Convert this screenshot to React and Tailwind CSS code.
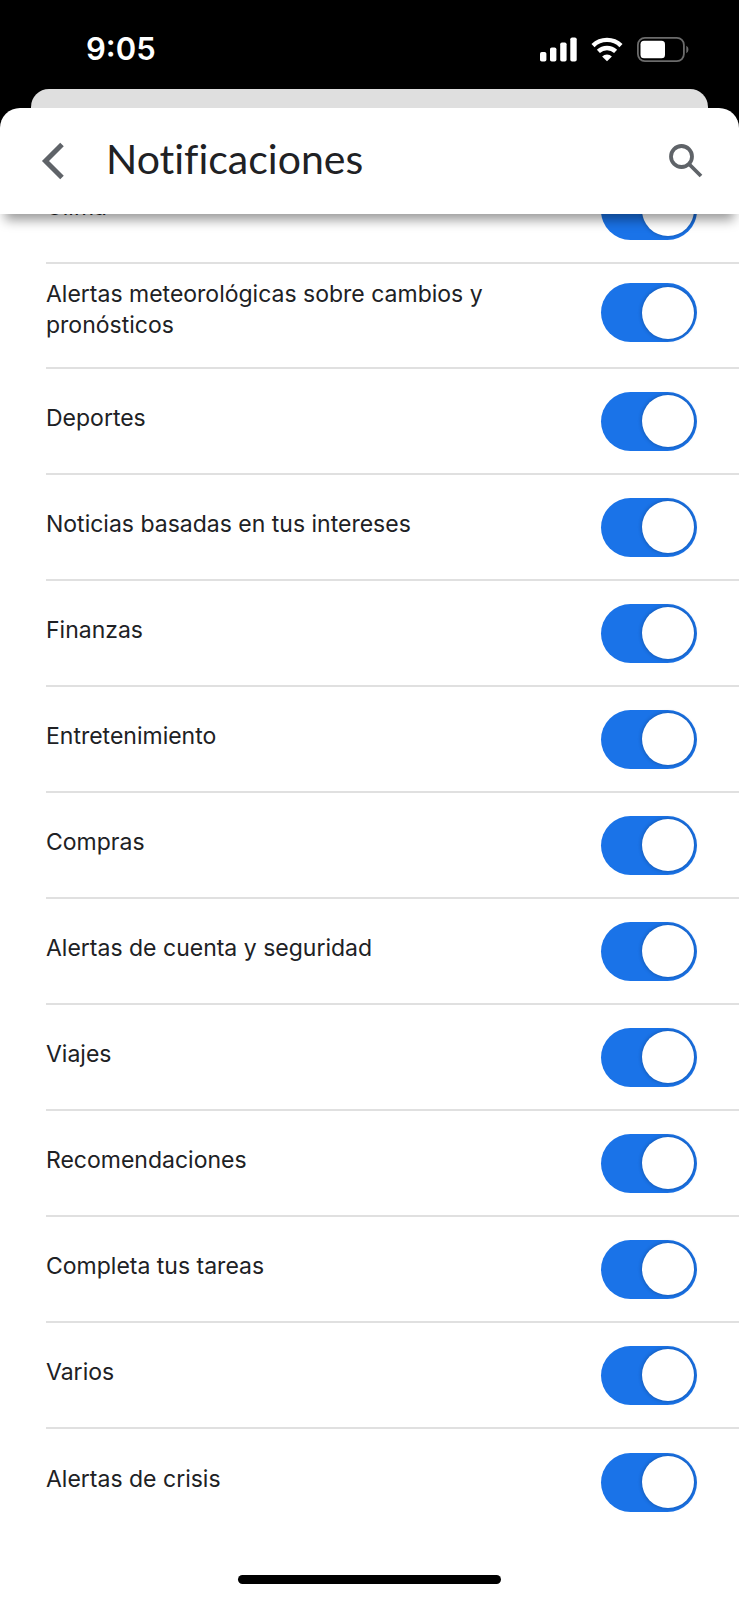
const categories = [
  'Clima',
  'Alertas meteorológicas sobre cambios y pronósticos',
  'Deportes',
  'Noticias basadas en tus intereses',
  'Finanzas',
  'Entretenimiento',
  'Compras',
  'Alertas de cuenta y seguridad',
  'Viajes',
  'Recomendaciones',
  'Completa tus tareas',
  'Varios',
  'Alertas de crisis',
];

function StatusBar() {
  return (
    <div className="flex h-[89px] items-center justify-between pt-[9px] pr-[50px] pl-[86px]">
      <span className="text-[31px] leading-10 font-semibold text-white">9:05</span>
      <div className="flex items-center gap-3.5">
        <svg width="37" height="25" viewBox="0 0 37 25" fill="#fff" aria-hidden="true">
          <rect x="0" y="15" width="6.4" height="9.5" rx="1.8" />
          <rect x="10" y="10.5" width="6.4" height="14" rx="1.8" />
          <rect x="20.200" y="5.500" width="6.400" height="19" rx="1.8" />
          <rect x="30.300" y="0.500" width="6.400" height="24" rx="1.8" />
        </svg>
        <svg width="32" height="25" viewBox="0 0 32 25" aria-hidden="true">
          <g fill="none" stroke="#fff" strokeWidth="4.400">
            <path d="M2 8.600a20 20 0 0 1 28 0" />
            <path d="M7.400 14.400a12.400 12.400 0 0 1 17.200 0" />
          </g>
          <path d="M16 24.300l-4.900-4.900a7 7 0 0 1 9.800 0z" fill="#fff" />
        </svg>
        <svg width="52" height="25" viewBox="0 0 52 25" aria-hidden="true">
          <rect x="0.900" y="0.900" width="46" height="23.200" rx="7" fill="none" stroke="#6b6b6b" strokeWidth="1.800" />
          <rect x="3.500" y="3.800" width="24.500" height="17.400" rx="3.500" fill="#fff" />
          <path d="M49.300 8.800c2.800 1.400 2.800 6 0 7.400z" fill="#6b6b6b" />
        </svg>
      </div>
    </div>
  );
}

function Header() {
  return (
    <header className="relative z-10 flex h-[106px] items-center rounded-t-[20px] bg-white px-9">
      <button type="button" aria-label="Atrás" className="flex w-[70px] items-center pl-[5px]">
        <svg width="24" height="38" viewBox="0 0 24 38" fill="none" stroke="#5f6368" strokeWidth="5">
          <path d="M21 2.500L4.500 19L21 35.500" />
        </svg>
      </button>
      <h1 className="flex-1 pb-1 font-[Lato,sans-serif] text-[41px] leading-12 text-[#202124] [font-variant-ligatures:no-common-ligatures]">
        Notificaciones
      </h1>
      <button type="button" aria-label="Buscar" className="flex items-center">
        <svg width="34" height="34" viewBox="0 0 34 34" fill="none" stroke="#5f6368" strokeWidth="3.800">
          <circle cx="12.500" cy="12.500" r="10.500" />
          <path d="M20 20l12 12" />
        </svg>
      </button>
    </header>
  );
}

function SettingRow({ id, label }) {
  const twoLines = label.length > 40;
  return (
    <li
      className={
        twoLines
          ? 'flex min-h-[105px] items-center gap-10 border-b-2 border-[#e0e0e0] pr-[42px] pb-1.5'
          : 'flex min-h-[106px] items-center gap-10 border-b-2 border-[#e0e0e0] pr-[42px] last:border-b-0'
      }
    >
      <label htmlFor={id} className="flex-1 pb-1.5 text-[23px] leading-[31px] text-[#202124]">
        <span className="block max-w-[450px]">{label}</span>
      </label>
      <input
        id={id}
        type="checkbox"
        role="switch"
        defaultChecked
        className="flex h-[59px] w-24 shrink-0 cursor-pointer appearance-none items-center rounded-full bg-[#9aa0a6] px-[3px] before:size-[52px] before:rounded-full before:bg-white before:shadow-[0_0_4px_rgba(0,0,0,0.3)] checked:justify-end checked:bg-[#1a73e8]"
      />
    </li>
  );
}

export default function App() {
  return (
    <div className="flex min-h-screen flex-col bg-white font-[Inter,sans-serif]">
      <div className="bg-black">
        <StatusBar />
        <div className="mx-[31px] h-[19px] rounded-t-[18px] bg-[#dfdfdf]" />
        <Header />
      </div>
      <div className="relative flex-1 overflow-hidden">
        <div className="absolute inset-x-0 -top-10 z-10 h-10 shadow-[0_11px_12px_-5px_rgba(0,0,0,0.4)]" />
        <ul className="-mt-14 pl-[46px]">
          {categories.map((label, i) => (
            <SettingRow key={label} id={`category-${i}`} label={label} />
          ))}
        </ul>
      </div>
      <footer className="flex justify-center pb-4">
        <div className="h-[9px] w-[263px] rounded-full bg-black" />
      </footer>
    </div>
  );
}
